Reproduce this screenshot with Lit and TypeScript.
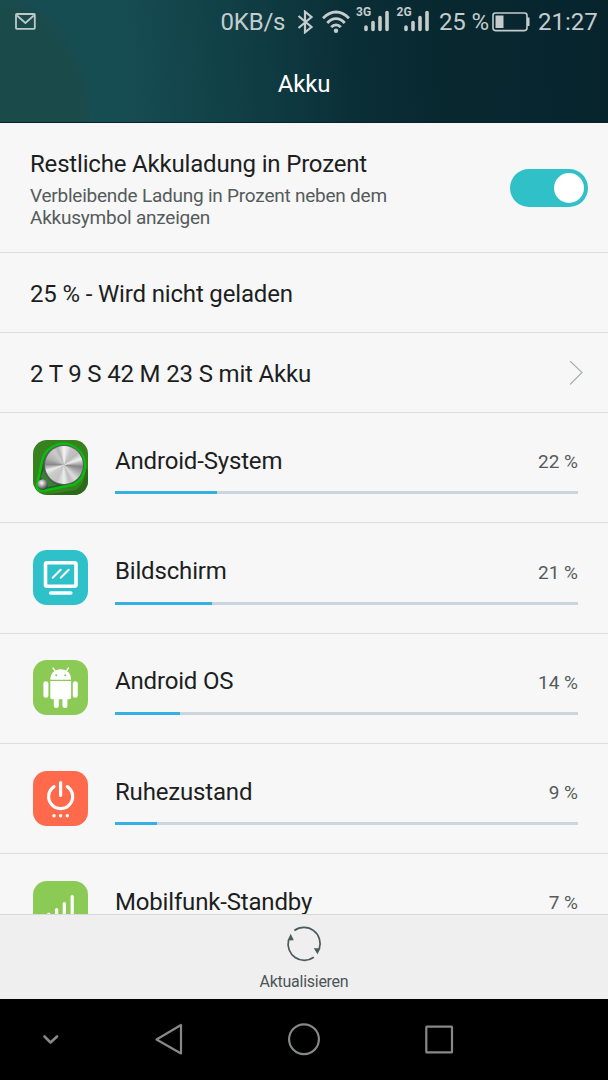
import { LitElement, html, svg, css } from "lit";
import { customElement, property } from "lit/decorators.js";

const tiles: Record<string, unknown> = {
  system: svg`
    <defs>
      <clipPath id="tile"><rect width="55" height="55" rx="14"/></clipPath>
      <radialGradient id="ball" cx=".4" cy=".35" r=".7">
        <stop offset="0" stop-color="#fff"/><stop offset=".5" stop-color="#999"/><stop offset="1" stop-color="#333"/>
      </radialGradient>
    </defs>
    <g clip-path="url(#tile)">
      <rect width="55" height="55" fill="#39801f"/>
      <path d="M11 55L43 50Q52 44 53 28L55 30V55Z" fill="#2b6a1c"/>
      <path d="M4 45L9.300 20A21.700 21.700 0 1 1 41 44.500L12 50.500Q3 52 4 45Z" fill="#2a5a26" stroke="#06bf0c" stroke-width="2.600"/>
      <path d="M7.500 37L10.500 30Q15 42 25 45L15 47Z" fill="#3d7d35"/>
    </g>
    <circle cx="30.700" cy="24.900" r="20.200" fill="#5a605c"/>
    <circle cx="9.700" cy="44.500" r="5.200" fill="url(#ball)"/>`,
  screen: svg`
    <rect width="55" height="55" rx="14" fill="#2fc1c9"/>
    <g fill="none" stroke="#fff" stroke-linecap="round">
      <rect x="12.500" y="12.700" width="30.500" height="23.500" rx="1.500" stroke-width="3.600"/>
      <path d="M17.700 43H37.800" stroke-width="3.600"/>
      <path d="M19.700 27.700L27.700 19.700M27.700 27.700L35.700 19.700" stroke-width="2"/>
    </g>`,
  android: svg`
    <rect width="55" height="55" rx="14" fill="#8aca55"/>
    <g fill="#fff">
      <path d="M17.300 19.700C17.300 13.400 21.500 9.300 27.700 9.300S38.100 13.400 38.100 19.700Z"/>
      <path d="M17.300 21H38.100V37.500Q38.100 39.200 36.400 39.200H19Q17.300 39.200 17.300 37.500Z"/>
      <rect x="10.400" y="21.300" width="5" height="16.500" rx="2.500"/>
      <rect x="39.800" y="21.300" width="5" height="16.500" rx="2.500"/>
      <rect x="20.800" y="33" width="5" height="15" rx="2.500"/>
      <rect x="29.400" y="33" width="5" height="15" rx="2.500"/>
    </g>
    <path d="M22.500 11.500L20 8M33 11.500L35.500 8" stroke="#fff" stroke-width="1.300" stroke-linecap="round"/>
    <circle cx="23.200" cy="15.300" r="1" fill="#8aca55"/><circle cx="32.200" cy="15.300" r="1" fill="#8aca55"/>`,
  power: svg`
    <rect width="55" height="55" rx="14" fill="#ff6a4c"/>
    <path d="M21 15.600A12 12 0 1 0 34.300 15.600M27.600 11.500V24.500" fill="none" stroke="#fff" stroke-width="3.200" stroke-linecap="round"/>
    <g fill="#fff"><circle cx="21" cy="44.700" r="1.700"/><circle cx="27.600" cy="44.700" r="1.700"/><circle cx="34.300" cy="44.700" r="1.700"/></g>`,
  signal: svg`
    <rect width="55" height="55" rx="14" fill="#8aca55"/>
    <path d="M15.700 33V42M23.600 28.500V42M31.300 22.500V42M39.200 15.500V42" stroke="#fff" stroke-width="3.200" stroke-linecap="round"/>`,
};

@customElement("battery-consumer")
class BatteryConsumer extends LitElement {
  @property() name = "";
  @property() icon = "";
  @property({ type: Number }) percent = 0;
  @property({ type: Number }) fill = 0;

  static styles = css`
    :host {
      display: flex;
      box-sizing: border-box;
      flex: none;
      height: 110.250px;
      padding: 26.750px 30px 0 33px;
      border-bottom: 1px solid #dedede;
      gap: 27px;
    }
    .tile { position: relative; flex: none; width: 55px; height: 55px; }
    .tile svg { display: block; width: 55px; height: 55px; }
    .sheen {
      position: absolute; left: 11.700px; top: 5.900px; width: 38px; height: 38px; border-radius: 50%;
      background: conic-gradient(#f5f5f5, #c4c4c4 25deg, #bbb 50deg, #efefef 70deg, #858585 95deg, #a5a5a5 112deg, #ddd 140deg, #bcbcbc 160deg, #eee 180deg, #c4c4c4 205deg, #ccc 235deg, #eee 252deg, #888 272deg, #b4b4b4 295deg, #ccc 325deg, #b4b4b4 340deg, #f5f5f5);
    }
    .body { flex: 1; }
    .line { display: flex; justify-content: space-between; align-items: baseline; height: 51.500px; line-height: 42px; }
    .name { font-size: 24px; letter-spacing: -.17px; color: #1d1f1f; }
    .value { position: relative; top: -.5px; font-size: 19px; color: #555b5b; }
    .track { height: 3px; background: #cbd5db; }
    .used { height: 3px; background: #35b1e1; }
  `;

  render() {
    return html`
      <div class="tile">
        <svg viewBox="0 0 55 55">${tiles[this.icon]}</svg>
        ${this.icon === "system" ? html`<div class="sheen"></div>` : ""}
      </div>
      <div class="body">
        <div class="line"><span class="name">${this.name}</span><span class="value">${this.percent} %</span></div>
        <div class="track"><div class="used" style="width:${this.fill}px"></div></div>
      </div>`;
  }
}

const consumers = [
  { name: "Android-System", icon: "system", percent: 22, fill: 102 },
  { name: "Bildschirm", icon: "screen", percent: 21, fill: 97 },
  { name: "Android OS", icon: "android", percent: 14, fill: 65 },
  { name: "Ruhezustand", icon: "power", percent: 9, fill: 42 },
  { name: "Mobilfunk-Standby", icon: "signal", percent: 7, fill: 32 },
];

@customElement("app-root")
class AppRoot extends LitElement {
  static styles = css`
    :host {
      display: flex; flex-direction: column; width: 608px; height: 1080px; overflow: hidden;
      font-family: Roboto, sans-serif; background: #f7f7f7; color: #1d1f1f;
    }
    svg { display: block; flex: none; }
    header {
      flex: none; height: 123px; box-sizing: border-box; border-bottom: 1px solid #0a2229;
      background:
        radial-gradient(ellipse 94px 130px at 0 123px, #1b4a4b 0 90%, transparent 100%),
        linear-gradient(86deg, #164d53 0, #164d53 20%, #13464c 30%, #0f3b42 44%, #0b2f37 57%, #082830 72%, #07242d 100%);
    }
    .status { display: flex; align-items: center; height: 43px; color: #c4cccd; font-size: 24px; white-space: nowrap; }
    .mail { margin-left: 15px; }
    .speed { width: 67px; margin-left: 184.500px; letter-spacing: -.2px; }
    .bt { margin-left: 9px; }
    .wifi { margin-left: 8px; }
    .cell { position: relative; width: 34px; height: 43px; margin-left: 6px; }
    .second { margin-left: 6.500px; }
    .gen { position: absolute; left: .5px; top: 6px; font-size: 12px; line-height: 13px; font-weight: 700; }
    .charge { width: 52px; margin-left: 9px; letter-spacing: -.15px; }
    .battery { margin-left: 1px; }
    .clock { margin-left: 8px; }
    h1 { margin: 0; text-align: center; color: #fff; font-size: 24px; font-weight: 400; line-height: 82px; letter-spacing: -.2px; }
    .row { display: flex; flex: none; align-items: center; justify-content: space-between; box-sizing: border-box; height: 80px; padding: 3px 25px 0 30px; border-bottom: 1px solid #dedede; font-size: 24px; letter-spacing: -.16px; }
    .setting { height: 130px; padding: 0 20px 0 30px; }
    .title { line-height: 30px; margin-top: 3px; letter-spacing: -.18px; }
    .hint { margin-top: 6px; font-size: 19px; line-height: 22px; letter-spacing: -.23px; color: #555b5b; }
    .switch { display: flex; justify-content: flex-end; box-sizing: border-box; width: 78px; height: 38px; padding: 4px; border-radius: 19px; background: #30c1c8; }
    .knob { width: 30px; height: 30px; border-radius: 50%; background: #fff; }
    .list { flex: 1; min-height: 0; overflow: hidden; display: flex; flex-direction: column; }
    footer { flex: none; display: flex; flex-direction: column; align-items: center; box-sizing: border-box; height: 85px; padding-top: 11px; border-top: 1px solid #d8d8d8; background: #efefef; color: #4d5555; font-size: 16px; }
    .action { margin-top: 10px; line-height: 20px; letter-spacing: -.27px; }
    nav { flex: none; height: 81px; display: flex; background: #000; }
  `;

  private bars() {
    return html`<svg width="34" height="43" viewBox="0 0 34 43">
      <path d="M10 27V29.500M17 22.500V29.500M24 17.500V29.500M31 12.500V29.500" fill="none" stroke="#c4cccd" stroke-width="3.600" stroke-linecap="round"/>
    </svg>`;
  }

  render() {
    return html`
      <header>
        <div class="status">
          <svg class="mail" width="21" height="17" viewBox="0 0 21 17" fill="none" stroke="#bdc9c9" stroke-width="1.800">
            <rect x="1" y="1" width="18.800" height="14.800" rx=".8"/><path d="M2 2.500L10.400 10L18.800 2.500"/>
          </svg>
          <span class="speed">0KB/s</span>
          <svg class="bt" width="17" height="24" viewBox="0 0 17 24" fill="none" stroke="#c4cccd" stroke-width="2.200">
            <path d="M1.500 6L14.500 17L8 22.300V1.700L14.500 7L1.500 18"/>
          </svg>
          <svg class="wifi" width="28" height="24" viewBox="0 0 28 24" fill="none" stroke="#c4cccd" stroke-width="2.800">
            <path d="M1 8.300Q7 2 14 2T27 8.300M5.300 13Q9 8.700 14 8.700T22.700 13M9.200 17.200Q11.300 14.800 14 14.800T18.800 17.200"/>
            <circle cx="14" cy="20.700" r="2.200" fill="#c4cccd" stroke="none"/>
          </svg>
          <div class="cell">${this.bars()}<span class="gen">3G</span></div>
          <div class="cell second">${this.bars()}<span class="gen">2G</span></div>
          <span class="charge">25 %</span>
          <svg class="battery" width="38" height="20" viewBox="0 0 38 20">
            <rect x="1" y="1" width="34" height="17.600" rx="2.500" fill="none" stroke="#c4cccd" stroke-width="1.600"/>
            <path d="M3.500 3.500H11.500V16H3.500ZM35 5.500H37.500V14H35Z" fill="#c4cccd"/>
          </svg>
          <span class="clock">21:27</span>
        </div>
        <h1>Akku</h1>
      </header>
      <section class="row setting">
        <div>
          <div class="title">Restliche Akkuladung in Prozent</div>
          <div class="hint">Verbleibende Ladung in Prozent neben dem<br>Akkusymbol anzeigen</div>
        </div>
        <div class="switch"><div class="knob"></div></div>
      </section>
      <section class="row">25 % - Wird nicht geladen</section>
      <section class="row">2 T 9 S 42 M 23 S mit Akku
        <svg width="14" height="26" viewBox="0 0 14 26" fill="none" stroke="#a9b0b0" stroke-width="1.200"><path d="M1 0L13 11.500L1 23.500"/></svg>
      </section>
      <main class="list">
        ${consumers.map((c) => html`<battery-consumer .name=${c.name} .icon=${c.icon} .percent=${c.percent} .fill=${c.fill}></battery-consumer>`)}
      </main>
      <footer>
        <svg width="36" height="36" viewBox="0 0 36 36" fill="none" stroke="#4d5a5a" stroke-width="1.700">
          <path d="M8.400 4.500A16.200 16.200 0 0 1 33.200 23M27.800 31.200A16.200 16.200 0 0 1 2.600 14"/>
          <path d="M4.700 7.800L7.800 14.300L1.500 14.600ZM31.500 28.300L27.800 22.300L34.500 22.200Z" fill="#4d5a5a" stroke="none"/>
        </svg>
        <div class="action">Aktualisieren</div>
      </footer>
      <nav>
        <svg width="608" height="81" viewBox="0 0 608 81" fill="none" stroke="#858988" stroke-width="2.200" stroke-linecap="round" stroke-linejoin="round">
          <path d="M44.500 37.500L50.500 43.500L57 37.500" stroke-width="2.600"/>
          <path d="M156.500 40.500L181 26V54.500Z"/>
          <circle cx="304" cy="40.300" r="14.900"/>
          <rect x="426.300" y="27.700" width="25.700" height="25.700" rx=".5"/>
        </svg>
      </nav>`;
  }
}
